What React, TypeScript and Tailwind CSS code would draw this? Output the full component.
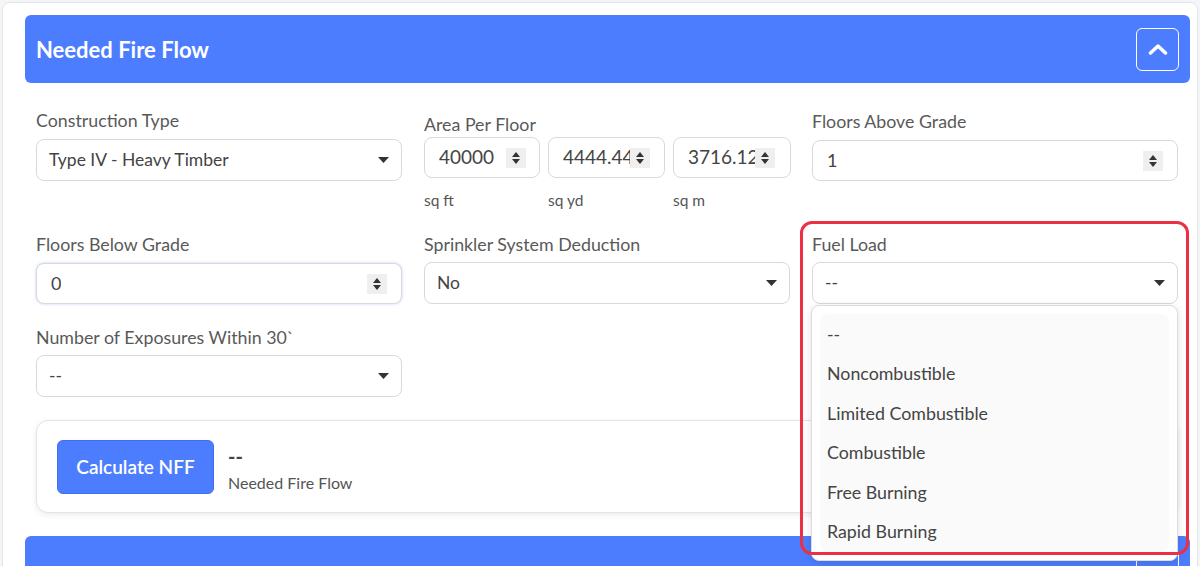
import React from 'react';

const font = { fontFamily: 'Lato, "Open Sans", sans-serif' };

const Spinner = () => (
  <span className="flex h-[20px] w-[20px] shrink-0 items-center justify-center bg-[#efefef]">
    <svg width="10" height="14" viewBox="0 0 10 14">
      <path d="M5 1 L9 6 H1 Z" fill="#333" />
      <path d="M5 13 L9 8 H1 Z" fill="#333" />
    </svg>
  </span>
);

const Caret = () => (
  <svg width="11" height="6" viewBox="0 0 11 6">
    <path d="M0 0 H11 L5.5 6 Z" fill="#333" />
  </svg>
);

const Label = ({ children }: { children: React.ReactNode }) => (
  <div className="h-[24px] text-[17.8px] leading-[24px] text-[#595959]">{children}</div>
);

const SelectBox = ({ value, className = '' }: { value: string; className?: string }) => (
  <div
    className={`flex h-[42px] items-center justify-between rounded-lg border border-[#d9d9d9] bg-white pl-[12px] pr-[12px] text-[17.5px] text-[#444] ${className}`}
  >
    <span>{value}</span>
    <Caret />
  </div>
);

const NumberBox = ({
  value,
  className = '',
}: {
  value: string;
  className?: string;
}) => (
  <div
    className={`flex h-[41px] items-center justify-between rounded-lg border border-[#d9d9d9] bg-white pl-[14px] pr-[14px] text-[18px] text-[#444] ${className}`}
  >
    <span className="overflow-hidden whitespace-nowrap">{value}</span>
    <Spinner />
  </div>
);

const AreaBox = ({ value }: { value: string }) => (
  <div className="flex h-[41px] items-center rounded-lg border border-[#d9d9d9] bg-white pl-[14px] pr-[12px] text-[19px] text-[#444]">
    <span className="w-[67px] overflow-hidden whitespace-nowrap">{value}</span>
    <Spinner />
  </div>
);

const options = [
  '--',
  'Noncombustible',
  'Limited Combustible',
  'Combustible',
  'Free Burning',
  'Rapid Burning',
];

export default function App() {
  return (
    <div
      className="relative h-[566px] w-[1200px] overflow-hidden bg-[#f4f5f7] pl-[2px] pr-[2px] pt-[2px]"
      style={font}
    >
      <div className="h-[600px] rounded-lg border border-[#e3e5e9] bg-white pl-[22px] pr-[7px] pt-[12px]">
        {/* header */}
        <div className="flex h-[68px] items-center justify-between rounded-md bg-[#4d7dff] pl-[11px] pr-[11px]">
          <h2 className="text-[22px] font-bold text-white">Needed Fire Flow</h2>
          <button className="flex h-[43px] w-[43px] items-center justify-center rounded-md border-[1.5px] border-white">
            <svg width="20" height="12" viewBox="0 0 20 12">
              <path
                d="M2.5 10 L10 3 L17.5 10"
                fill="none"
                stroke="white"
                strokeWidth="3.5"
                strokeLinecap="round"
                strokeLinejoin="round"
              />
            </svg>
          </button>
        </div>

        <div className="ml-[11px] mr-[12px]">
          {/* row 1 */}
          <div className="mt-[25px] grid grid-cols-3 gap-x-[22px]">
            <div>
              <Label>Construction Type</Label>
              <SelectBox value="Type IV - Heavy Timber" className="mt-[7px]" />
            </div>
            <div className="pt-[4px]">
              <Label>Area Per Floor</Label>
              <div className="mt-[1px] grid grid-cols-[116px_117px_118px] gap-x-[8px]">
                <div>
                  <AreaBox value="40000" />
                  <div className="mt-[11px] text-[15.5px] text-[#555]">sq ft</div>
                </div>
                <div>
                  <AreaBox value="4444.44" />
                  <div className="mt-[11px] text-[15.5px] text-[#555]">sq yd</div>
                </div>
                <div>
                  <AreaBox value="3716.12" />
                  <div className="mt-[11px] text-[15.5px] text-[#555]">sq m</div>
                </div>
              </div>
            </div>
            <div className="pt-[1px]">
              <Label>Floors Above Grade</Label>
              <NumberBox value="1" className="mt-[7px] h-[40px]" />
            </div>
          </div>

          {/* row 2 */}
          <div className="mt-[20px] grid grid-cols-3 gap-x-[22px]">
            <div>
              <Label>Floors Below Grade</Label>
              <NumberBox
                value="0"
                className="mt-[7px] border-[#c8d5f2] shadow-[0_0_3px_rgba(77,125,255,0.35)]"
              />
            </div>
            <div>
              <Label>Sprinkler System Deduction</Label>
              <SelectBox value="No" className="mt-[6px]" />
            </div>
            <div className="relative">
              <Label>Fuel Load</Label>
              <SelectBox value="--" className="mt-[6px]" />
              <div className="absolute left-[-1px] right-[0px] top-[73px] z-10 rounded-lg border border-[#dcdcdc] bg-white p-[8px] shadow-[0_2px_8px_rgba(0,0,0,0.12)]">
                <div className="rounded-lg bg-[#fafafa] pb-[1px]">
                  {options.map((o) => (
                    <div
                      key={o}
                      className="flex h-[39.5px] items-center pl-[7px] text-[17.8px] text-[#444]"
                    >
                      {o}
                    </div>
                  ))}
                </div>
              </div>
            </div>
          </div>

          {/* row 3 */}
          <div className="mt-[21px] grid grid-cols-3 gap-x-[22px]">
            <div>
              <Label>Number of Exposures Within 30`</Label>
              <SelectBox value="--" className="mt-[6px]" />
            </div>
          </div>

          {/* result */}
          <div className="mt-[23px] flex h-[93px] items-center rounded-xl border border-[#e3e3e3] bg-white pl-[20px] shadow-[0_2px_6px_rgba(0,0,0,0.08)]">
            <button className="h-[54px] w-[157px] rounded-md border border-[#3f6ef0] bg-[#4d7dff] text-[19px] font-semibold text-white">
              Calculate NFF
            </button>
            <div className="ml-[14px] flex flex-col pt-[6px]">
              <span className="text-[20px] font-bold leading-[22px] text-[#444]">--</span>
              <span className="mt-[4px] text-[16px] text-[#555]">Needed Fire Flow</span>
            </div>
          </div>
        </div>

        {/* next section */}
        <div className="mt-[23px] flex h-[68px] items-center justify-between rounded-md bg-[#4d7dff] pl-[11px] pr-[11px]">
          <h2 className="mt-[14px] text-[22px] font-bold text-white">Resources Requirements</h2>
          <div className="h-[43px] w-[43px] rounded-md border-[1.5px] border-white" />
        </div>
      </div>

      {/* annotation */}
      <div className="pointer-events-none absolute left-[800px] top-[221px] z-20 h-[334px] w-[389px] rounded-[12px] border-[3px] border-[#ec2f45]" />
    </div>
  );
}
